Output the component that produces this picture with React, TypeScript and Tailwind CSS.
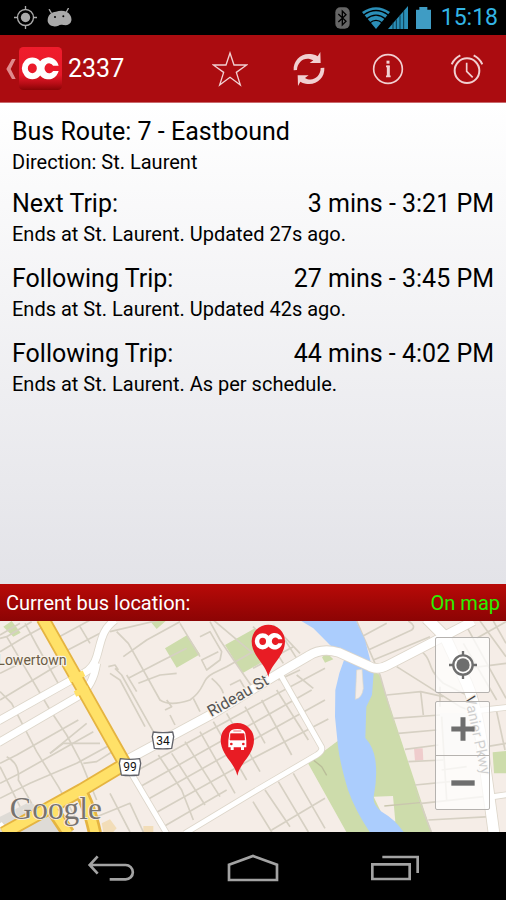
import React from 'react';

interface Trip {
  label: string;
  time: string;
  note: string;
}

const trips: Trip[] = [
  { label: 'Next Trip:', time: '3 mins - 3:21 PM', note: 'Ends at St. Laurent. Updated 27s ago.' },
  { label: 'Following Trip:', time: '27 mins - 3:45 PM', note: 'Ends at St. Laurent. Updated 42s ago.' },
  { label: 'Following Trip:', time: '44 mins - 4:02 PM', note: 'Ends at St. Laurent. As per schedule.' },
];

// The two joined rings of the OC mark, on a 111x66 box
const OcMark: React.FC = () => (
  <g fill="#fff">
    <ellipse cx="32" cy="33" rx="22.5" ry="23.5" fill="none" stroke="#fff" strokeWidth="18" />
    <path d="M111 25H94.4A14 15 0 1 0 94.4 41H111A32 33 0 1 1 111 25Z" />
  </g>
);

const StatusBar: React.FC = () => (
  <div className="flex h-[35px] items-center justify-between bg-black pl-3.5 pr-2">
    <div className="flex items-center gap-2.5">
      <svg className="h-[23px] w-[23px]" viewBox="0 0 69 69" fill="none" stroke="#aaa" strokeWidth="4">
        <circle cx="34.500" cy="34.500" r="24" />
        <circle cx="34.500" cy="34.500" r="14" fill="#aaa" stroke="none" />
        <path d="M34.500 0v12M34.500 57v12M0 34.500h12M57 34.500h12" />
      </svg>
      <svg className="h-[19px] w-[25px]" viewBox="0 0 75 57">
        <path d="M2 40C1 22 12 12 27 11C37 7 50 7 58 11C69 16 75 27 73 38C71 48 61 53 49 51C42 49 38 50 34 53C25 58 5 56 2 40Z" fill="#aaa" />
        <path d="M13 15L7 5M58 12L64 1" stroke="#aaa" strokeWidth="4" strokeLinecap="round" />
        <circle cx="24" cy="27" r="3" />
        <circle cx="49" cy="25" r="3" />
      </svg>
    </div>
    <div className="flex items-center">
      <svg className="mr-3 h-[22px] w-[15px]" viewBox="0 0 45 66">
        <rect x="1" y="1" width="43" height="64" rx="15" fill="#666" />
        <path d="M10 21L33 43L22 54V12L33 23L10 45" fill="none" stroke="#000" strokeWidth="4" />
      </svg>
      <svg className="h-[22px] w-[28px]" viewBox="0 0 84 66">
        <path d="M0 15Q42-13 84 15L42 66Z" fill="#2b8fb8" />
        <path d="M5 24Q42-3 79 24M13 36Q42 13 71 36M23 48Q42 32 61 48" fill="none" stroke="#000" strokeWidth="4" />
      </svg>
      <svg className="-ml-0.5 mr-2 h-[23px] w-[20px]" viewBox="0 0 60 69" fill="#2b8fb8">
        <path d="M0 69L60 0V69Z" />
        <path d="M15 69V50M25 69V40M36 69V28M47 69V15" stroke="#0b3a4d" strokeWidth="3" />
      </svg>
      <svg className="mr-2.5 h-[22px] w-[15px]" viewBox="0 0 45 66" fill="#3f9cc4">
        <path d="M0 8H10V0H34V8H45V66H0Z" />
      </svg>
      <span className="text-[23px] leading-none text-[#33b5e5]">15:18</span>
    </div>
  </div>
);

const actionButton = 'flex h-full w-[79px] items-center justify-center';

const ActionBar: React.FC = () => (
  <header className="flex h-[68px] items-center border-b border-[#c96a6d] bg-[#ab0c10]">
    <a href="#stops" aria-label="Back to stops" className="flex items-center gap-[3px] pl-[6px]">
      <svg className="h-[20px] w-[10px]" viewBox="0 0 30 60" fill="#e08a8c">
        <path d="M18 0H29L14 30L29 60H18L1 30Z" />
      </svg>
      <svg className="h-[43px] w-[43px]" viewBox="0 0 129 129">
        <defs>
          <linearGradient id="logo" x1="0" y1="0" x2="0" y2="1">
            <stop offset="0" stopColor="#f01c2c" />
            <stop offset=".65" stopColor="#e8192a" />
            <stop offset=".85" stopColor="#b80d16" />
            <stop offset="1" stopColor="#880406" />
          </linearGradient>
        </defs>
        <rect width="129" height="129" rx="13" fill="url(#logo)" />
        <g transform="translate(8 31)">
          <OcMark />
        </g>
      </svg>
    </a>
    <h1 className="ml-1.5 text-[25px] leading-[30px] text-white">2337</h1>
    <div className="ml-auto flex h-full">
      <button aria-label="Favourite" className={actionButton}>
        <svg className="h-[36px] w-[36px]" viewBox="0 0 108 108" fill="none" stroke="#f1d0d1" strokeWidth="4">
          <path d="M54 6L66 42H104L73 64L85 102L54 79L23 102L35 64L4 42H42Z" />
        </svg>
      </button>
      <button aria-label="Refresh" className={actionButton}>
        <svg className="h-[34px] w-[32px]" viewBox="0 0 96 102" fill="#f1d0d1">
          <path d="M2 55C0 24 27 0 58 7Q68 9 74 13L82 0L83 33L50 33L61 25C37 11 13 28 12 54Z" />
          <path d="M94 47C96 78 69 102 38 95Q28 93 22 89L15 102L14 70L47 70L36 78C59 91 83 74 83 48Z" />
        </svg>
      </button>
      <button aria-label="Information" className={actionButton}>
        <svg className="h-[32px] w-[32px]" viewBox="0 0 96 96" fill="none" stroke="#f1d0d1">
          <circle cx="48" cy="48" r="43" strokeWidth="5" />
          <path d="M49 38V70" strokeWidth="9" />
          <path d="M42 40H53M42 70H56" strokeWidth="5" />
          <path d="M48 23v9" strokeWidth="9" />
        </svg>
      </button>
      <button aria-label="Alarm" className={actionButton}>
        <svg className="h-[32px] w-[32px]" viewBox="0 0 96 96" fill="none" stroke="#f1d0d1" strokeWidth="6">
          <circle cx="48" cy="53" r="37" />
          <path d="M47 29V55L65 73" strokeWidth="5" />
          <path d="M2 34Q10 16 28 7M94 34Q86 16 68 7" />
        </svg>
      </button>
    </div>
  </header>
);

const RouteShield: React.FC<{ x: number; y: number; label: string }> = ({ x, y, label }) => (
  <g transform={`translate(${x} ${y})`}>
    <path d="M-29-26Q0-22 29-26L32-12L26 23Q0 26-26 23L-32-12Z" fill="#fff" stroke="#62636a" strokeWidth="4" strokeLinejoin="round" />
    <text y="12" textAnchor="middle" fontSize="36" fill="#111">
      {label}
    </text>
  </g>
);

const streets = [
  // west of the highway
  'M0 95L75 50L130 20M0 160L70 125M0 240L190 125M0 45L60 10M0 215L35 250L110 395L175 500L225 590',
  'M20 50L150 270L200 345L245 430L290 540M75 10L110 75L180 200M0 55L20 50L95 5',
  'M0 490L60 460L280 335M0 430L50 405L235 300',
  'M150 400L190 370L300 370M0 535L90 490L230 430L330 375M20 410Q60 430 55 480L95 550M0 440L60 560M250 430L290 425L345 390',
  'M260 310L150 400M300 470L370 440M290 590L390 550L430 636M330 520L390 636',
  // north of Rideau St
  'M160 60L280 -5M185 100L300 40M240 20L270 70M330 35L500 -5M350 35L385 70L480 240Q510 260 570 240C620 205 600 180 640 160L680 140L759 95',
  'M330 160L360 180L435 320M345 145L365 165L460 335M325 140L345 135L355 150M370 110L440 60L540 5M385 175L480 125L560 85',
  'M415 190L480 165L530 160M540 10L600 110M630 5L660 60L759 205M600 50L630 35L665 95L660 120L620 150L605 120L655 95M640 0L759 100',
  'M500 240L515 260L495 270M510 285L525 315M580 235L600 275M635 175Q665 200 670 220M690 195L720 180L740 215M380 165L410 215',
  // south of Rideau St
  'M405 455L759 260L975 145M420 500L759 310L935 210M440 540L759 360L975 240M465 580L759 415L985 297M490 620L680 510',
  'M475 405L545 510L580 600M515 400L615 555M555 365L660 530M600 335L705 520M640 305L740 480M680 280L780 455M735 260L795 370M785 240L875 405M830 210L925 360',
  'M855 60L890 115M890 165L940 205M759 20L815 75L850 130M759 145L880 80M820 15L900 100M835 180L900 150',
  // east side of the river
  'M1070 3L1140 165L1215 430L1294 636M1085 50L1160 10M1105 90L1235 30Q1250 18 1225 3M1120 120L1290 50M1160 225L1262 215L1330 230M1180 295L1320 285M1195 340L1310 330M1215 388L1315 375',
  'M1225 425L1330 420M1245 495L1350 485M1155 560L1265 550L1450 530M1285 600L1470 590M1262 215L1270 285M1190 140L1380 260L1420 275M1265 95C1300 120 1275 140 1330 190L1410 230',
  'M1400 20L1518 235M1390 70L1490 240M1440 3L1518 110M1480 3L1518 70M1430 55L1518 5M1400 145L1518 130M1490 275L1515 390M1460 380L1518 370M1320 200V260M1325 290L1340 540M1325 450L1400 440',
  'M759 545L815 636M795 510L870 620M835 485L925 636M880 460L975 625M815 630L975 535M940 420L965 435L980 465',
];

const BusMap: React.FC = () => (
  <svg className="block h-[211px] w-full" viewBox="0 3 1518 633" preserveAspectRatio="xMidYMid slice" role="img" aria-label="Map" fontFamily="Roboto, sans-serif">
    <rect y="3" width="1518" height="633" fill="#f5ede7" />

    {/* Parks and blocks */}
    <g fill="#cddcab">
      <path d="M495 85L562 45L600 103L530 143ZM675 75L765 25L850 90L727 160ZM10 20L35 3L62 38L40 50ZM450 3H497L470 27Z" />
      <path d="M966 112L980 98L1000 118L975 128Z" />
      <path d="M924 430L1010 365L1100 300L1119 150L1139 165L1294 636H1039Z" />
      <path d="M1478 397L1518 393V460H1482Z" />
    </g>
    <path d="M0 590L90 545L220 636H0Z" fill="#dedbd6" />
    <path d="M305 610L330 598L350 625L340 636H310Z" fill="#f2ddb8" />
    <path d="M430 618H460V636H430Z" fill="#f2ddb8" />
    <path d="M1242 385H1268L1270 420L1245 422Z" fill="#efcccc" />
    <path d="M1320 280H1410V400H1330Z" fill="#eeebe8" />

    <g fill="none" stroke="#d6d0c3" strokeWidth="5" strokeLinejoin="round">
      {streets.map((d) => (
        <path key={d} d={d} />
      ))}
    </g>

    {/* Park strip over the streets, then the river */}
    <path d="M1119 150L1137 170L1288 636H1044L928 432L1010 367L1060 350Z" fill="#cddcab" />
    <path d="M940 420L965 440L980 466" fill="none" stroke="#b9bd98" strokeWidth="4" />
    <path d="M1121 530L1179 528L1186 605L1150 590Z" fill="#f5ede7" />
    <path d="M1153 558L1260 548" stroke="#c9c6ae" strokeWidth="4" />
    <path d="M904 3L940 25L990 75L1034 115L1018 160L1006 210L1005 290L1014 380Q1020 430 1044 510Q1065 570 1109 636H1211Q1185 598 1145 575Q1118 555 1121 530Q1133 470 1126 420Q1120 380 1096 354L1099 260L1116 225L1121 160L1095 60L1068 3Z" fill="#abcdfd" />
    <path d="M1070 150L1086 148L1090 205Q1086 235 1066 238Z" fill="#f5ede7" stroke="#e0d9cb" strokeWidth="2" />

    {/* White roads, casing first */}
    {[
      { color: '#ddd6ca', extra: 5 },
      { color: '#fff', extra: 0 },
    ].map(({ color, extra }) => (
      <g key={color} fill="none" stroke={color} strokeLinejoin="round">
        <path d="M-5 303L250 160Q280 145 290 110C305 60 305 30 345 0M-5 368L240 226Q280 195 290 130" strokeWidth={21 + extra} />
        <path d="M380 420L640 280L845 155L925 108Q965 82 1015 97L1105 137Q1130 154 1165 135L1330 50L1420 3" strokeWidth={26 + extra} />
        <path d="M1280 -5L1335 50L1400 190Q1430 260 1450 400L1482 640" strokeWidth={32 + extra} />
        <path d="M842 165L964 380Q970 393 950 405L759 517L555 640M395 462L500 640M1430 272L1522 262M1478 530L1522 524" strokeWidth={15 + extra} />
        <path d="M0 610L20 636" strokeWidth={14 + extra} />
      </g>
    ))}

    {/* Yellow highway */}
    <g fill="none" strokeLinejoin="round">
      <path d="M128 -5L230 175L375 432L245 510L10 640M240 512Q265 550 285 640M155 565L205 640" stroke="#e5b441" strokeWidth="42" />
      <path d="M128 -5L230 175L375 432L245 510L10 640" stroke="#ffe168" strokeWidth="31" />
      <path d="M240 512Q265 550 285 640M155 565L205 640" stroke="#ffe168" strokeWidth="26" />
      <path d="M208 180L252 160M225 222L265 205" stroke="#ffe168" strokeWidth="18" />
    </g>

    <RouteShield x={489} y={362} label="34" />
    <RouteShield x={390} y={442} label="99" />

    <g fill="#6b5c45" stroke="#f7f1ea" strokeWidth="8" paintOrder="stroke" strokeLinejoin="round">
      <text x="-8" y="135" fontSize="42">
        Lowertown
      </text>
      <text transform="translate(634 292) rotate(-30)" fontSize="48" fill="#555">
        Rideau St
      </text>
      <text transform="translate(1394 232) rotate(78)" fontSize="44" fill="#444">
        Vanier Pkwy
      </text>
    </g>

    <text x="29" y="598" fontSize="94" fill="#77736f" stroke="#f5ede7" strokeWidth="5" paintOrder="stroke" fontFamily="Liberation Serif, serif">
      Google
    </text>

    {/* Stop pin */}
    <g transform="translate(805 171)">
      <path d="M0 0C-8-40-50-62-50-107A50 50 0 0 1 50-107C50-62 8-40 0 0Z" fill="#e81c24" />
      <g transform="translate(-41 -132) scale(.75)">
        <OcMark />
      </g>
    </g>

    {/* Bus pin */}
    <g transform="translate(712 467)">
      <path d="M0 0C-8-40-50-62-50-108A50 50 0 0 1 50-108C50-62 8-40 0 0Z" fill="#e81c24" />
      <path d="M-24-127Q-22-140 0-140T24-127L27-105V-85H20V-77H11V-85H-11V-77H-20V-85H-27V-105Z" fill="#fff" />
      <path d="M-12-134H12M-20-126H20L22-107H-22Z" fill="#e81c24" stroke="#e81c24" strokeWidth="2" />
      <circle cx="-18" cy="-95" r="4" fill="#e81c24" />
      <circle cx="18" cy="-95" r="4" fill="#e81c24" />
    </g>
  </svg>
);

const MapControls: React.FC = () => (
  <div className="absolute right-4 top-4 flex w-[55px] flex-col gap-2">
    <button aria-label="My location" className="flex h-[56px] items-center justify-center rounded-xs border border-[#b5b2af] bg-white/75">
      <svg className="h-[28px] w-[28px]" viewBox="0 0 84 84" fill="none" stroke="#6e6e6e" strokeWidth="7">
        <circle cx="42" cy="42" r="29" />
        <circle cx="42" cy="42" r="20" fill="#6e6e6e" stroke="none" />
        <path d="M42 0v13M42 71v13M0 42h13M71 42h13" />
      </svg>
    </button>
    <div className="flex flex-col rounded-xs border border-[#b5b2af] bg-white/75">
      <button aria-label="Zoom in" className="flex h-[54px] items-center justify-center border-b border-[#b5b2af]">
        <svg className="h-[24px] w-[24px]" viewBox="0 0 72 72" stroke="#6e6e6e" strokeWidth="15">
          <path d="M36 1V71M1 36H71" />
        </svg>
      </button>
      <button aria-label="Zoom out" className="flex h-[53px] items-center justify-center">
        <svg className="h-[24px] w-[24px]" viewBox="0 0 72 72" stroke="#6e6e6e" strokeWidth="16">
          <path d="M1 36H71" />
        </svg>
      </button>
    </div>
  </div>
);

const navButton = 'flex w-[28%] items-center justify-center';

const NavBar: React.FC = () => (
  <nav className="flex h-[68px] justify-center bg-black pt-1">
    <button aria-label="Back" className={navButton}>
      <svg className="h-[27px] w-[48px]" viewBox="0 0 144 81" fill="none" stroke="#a3a3a3" strokeWidth="8">
        <path d="M8 30H116A21 21 0 0 1 116 73H68M32 4L8 30L32 56" />
      </svg>
    </button>
    <button aria-label="Home" className={navButton}>
      <svg className="h-[28px] w-[52px]" viewBox="0 0 156 84" fill="none" stroke="#a3a3a3" strokeWidth="8">
        <path d="M6 32L78 6L150 32V78H6Z" />
      </svg>
    </button>
    <button aria-label="Recent apps" className={navButton}>
      <svg className="h-[26px] w-[48px]" viewBox="0 0 144 78" fill="none" stroke="#a3a3a3" strokeWidth="8">
        <path d="M4 28H116V72H4ZM34 6H140V54" />
      </svg>
    </button>
  </nav>
);

const App: React.FC = () => {
  return (
    <div className="flex min-h-screen flex-col bg-black font-[Roboto,sans-serif]">
      <StatusBar />
      <ActionBar />

      <main className="flex-1 bg-linear-to-b from-white to-[#e3e3e8] px-3 pt-3 text-black">
        <section className="mb-3">
          <h2 className="text-[25px] leading-[34px]">Bus Route: 7 - Eastbound</h2>
          <p className="text-[20px] leading-[26px]">Direction: St. Laurent</p>
        </section>
        <div className="flex flex-col gap-[15px]">
          {trips.map((trip) => (
            <section key={trip.time}>
              <div className="flex justify-between text-[25px] leading-[34px]">
                <h3>{trip.label}</h3>
                <span>{trip.time}</span>
              </div>
              <p className="text-[20px] leading-[26px]">{trip.note}</p>
            </section>
          ))}
        </div>
      </main>

      <div className="flex h-[37px] items-center justify-between bg-linear-to-b from-[#b80a08] to-[#8c0404] px-1.5 text-[20px]">
        <h2 className="text-white">Current bus location:</h2>
        <a href="#map" className="text-[#2bf000]">On map</a>
      </div>

      <div className="relative overflow-hidden">
        <BusMap />
        <MapControls />
      </div>

      <NavBar />
    </div>
  );
};

export default App;
